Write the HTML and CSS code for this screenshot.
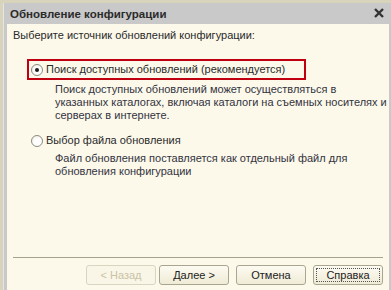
FILE: index.html
```html
<!DOCTYPE html>
<html lang="ru">
<head>
<meta charset="utf-8">
<title>Обновление конфигурации</title>
<link rel="stylesheet" href="styles.css">
</head>
<body>
<div class="window">
  <div class="titlebar">
    <span class="title">Обновление конфигурации</span>
    <svg class="close" width="10" height="10" viewBox="0 0 10 10"><path d="M1 1 L9 9 M9 1 L1 9" stroke="#333" stroke-width="2.4" fill="none"/></svg>
  </div>
  <div class="content">
    <div class="prompt">Выберите источник обновлений конфигурации:</div>
    <div class="option option-selected">
      <span class="radio radio-checked"></span>
      <span class="label">Поиск доступных обновлений (рекомендуется)</span>
    </div>
    <div class="desc">Поиск доступных обновлений может осуществляться в<br>указанных каталогах, включая каталоги на съемных носителях и<br>серверах в интернете.</div>
    <div class="option option-plain">
      <span class="radio"></span>
      <span class="label">Выбор файла обновления</span>
    </div>
    <div class="desc">Файл обновления поставляется как отдельный файл для<br>обновления конфигурации</div>
    <div class="footer">
      <div class="separator"></div>
      <div class="buttons">
        <div class="nav">
          <button class="btn btn-disabled">&lt; Назад</button>
          <button class="btn">Далее &gt;</button>
        </div>
        <button class="btn">Отмена</button>
        <button class="btn btn-focus"><span class="focus">Справка</span></button>
      </div>
    </div>
  </div>
</div>
</body>
</html>
```
FILE: styles.css
```css
html, body {
  margin: 0;
  padding: 0;
  height: 100%;
}
body {
  background: #d8d4bc;
  padding: 3px 0 0 3px;
  box-sizing: border-box;
  font-family: "Liberation Sans", Arial, sans-serif;
  font-size: 11px;
  color: #2a2a2a;
  overflow: hidden;
  white-space: nowrap;
}
.window {
  height: 100%;
  background: #c9c9c9;
  padding: 0 2px 0 3px;
  display: flex;
  flex-direction: column;
  box-sizing: border-box;
  border-left: 1px solid #e4e4e4;
}
.titlebar {
  height: 21px;
  display: flex;
  align-items: center;
  justify-content: space-between;
  padding: 0 5px 0 3px;
  flex: none;
}
.title {
  font-weight: bold;
  font-size: 11.5px;
  color: #2b2b2b;
}
.close {
  display: block;
  margin-top: -1px;
}
.content {
  flex: 1;
  background: #fcf9eb;
  display: flex;
  flex-direction: column;
  padding: 0 6px;
  line-height: 13px;
}
.prompt {
  margin-top: 5px;
  margin-bottom: 17px;
}
.option {
  display: flex;
  align-items: center;
  height: 17px;
}
.option-selected {
  width: 273px;
  margin-left: 14px;
  border: 2px solid #c00010;
  padding-left: 2px;
}
.option-plain {
  margin-left: 18px;
  margin-top: 10px;
}
.radio {
  width: 10px;
  height: 10px;
  border: 1px solid #8c8b80;
  border-radius: 50%;
  background: radial-gradient(circle at 60% 65%, #ffffff 40%, #e9e7dc 100%);
  position: relative;
  flex: none;
  margin-right: 3px;
}
.radio-checked::after {
  content: "";
  position: absolute;
  left: 3px;
  top: 3px;
  width: 4px;
  height: 4px;
  border-radius: 50%;
  background: #1e1e1e;
}
.desc {
  margin-left: 42px;
  margin-top: 3px;
  color: #333340;
}
.footer {
  margin-top: auto;
  padding-bottom: 5px;
}
.separator {
  height: 1px;
  background: #a6a48c;
  margin-bottom: 7px;
}
.buttons {
  display: flex;
  justify-content: flex-end;
  gap: 7px;
}
.nav {
  display: flex;
  gap: 3px;
}
.btn {
  width: 70px;
  height: 20px;
  box-sizing: border-box;
  border: 1px solid #a9a690;
  border-radius: 3px;
  background: linear-gradient(#fdfbf2, #efebd6);
  font-family: "Liberation Sans", Arial, sans-serif;
  font-size: 11px;
  color: #222;
  padding: 0;
  display: flex;
  align-items: center;
  justify-content: center;
}
.btn-disabled {
  color: #c9c3a4;
  border-color: #d9d5c0;
  background: #f9f6e8;
}
.btn-focus {
  padding: 2px;
}
.focus {
  display: flex;
  align-items: center;
  justify-content: center;
  width: 100%;
  height: 100%;
  border: 1px dotted #555;
  box-sizing: border-box;
}
```
